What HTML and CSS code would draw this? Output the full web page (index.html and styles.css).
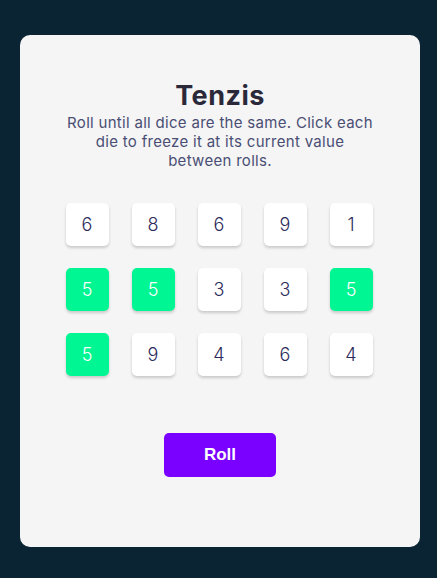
FILE: index.html
```html
<!DOCTYPE html>
<html lang="en">
<head>
<meta charset="utf-8">
<title>Tenzis</title>
<link rel="stylesheet" href="styles.css">
</head>
<body>
<main class="card">
  <h1 class="title">Tenzis</h1>
  <p class="instructions">Roll until all dice are the same. Click each die to freeze it at its current value between rolls.</p>
  <div class="dice">
    <div class="die">6</div>
    <div class="die">8</div>
    <div class="die">6</div>
    <div class="die">9</div>
    <div class="die">1</div>
    <div class="die held">5</div>
    <div class="die held">5</div>
    <div class="die">3</div>
    <div class="die">3</div>
    <div class="die held">5</div>
    <div class="die held">5</div>
    <div class="die">9</div>
    <div class="die">4</div>
    <div class="die">6</div>
    <div class="die">4</div>
  </div>
  <button class="roll">Roll</button>
</main>
</body>
</html>
```
FILE: styles.css
```css
html, body {
  margin: 0;
  padding: 0;
}
body {
  background: #0B2434;
  min-height: 578px;
  padding: 35px 17px 31px 20px;
  box-sizing: border-box;
  font-family: Inter, "Noto Sans", sans-serif;
}
.card {
  background: #F5F5F5;
  border-radius: 10px;
  height: 512px;
  width: 400px;
  box-sizing: border-box;
  padding-top: 44px;
  display: flex;
  flex-direction: column;
  align-items: center;
}
.title {
  margin: 0;
  font-size: 27px;
  line-height: 34px;
  font-weight: 700;
  color: #2B283A;
  letter-spacing: 0.5px;
}
.instructions {
  margin: 0;
  width: 312px;
  text-align: center;
  font-size: 15px;
  line-height: 19px;
  letter-spacing: 0.3px;
  color: #4A4E74;
}
.dice {
  margin-top: 33px;
  margin-right: 2px;
  display: grid;
  grid-template-columns: repeat(5, 43px);
  grid-auto-rows: 43px;
  column-gap: 23px;
  row-gap: 22px;
}
.die {
  background: #FFFFFF;
  border-radius: 5px;
  box-shadow: 0 2px 3px rgba(0, 0, 0, 0.18);
  display: flex;
  align-items: center;
  justify-content: center;
  font-size: 18px;
  font-weight: 300;
  color: #2B2A5A;
}
.die.held {
  background: #00F593;
  color: #FFFFFF;
}
.roll {
  margin-top: 57px;
  width: 112px;
  height: 44px;
  border: none;
  border-radius: 5px;
  background: #7A00FF;
  color: #FFFFFF;
  font-family: "Liberation Sans", Arial, sans-serif;
  font-weight: 700;
  font-size: 17px;
}
```
